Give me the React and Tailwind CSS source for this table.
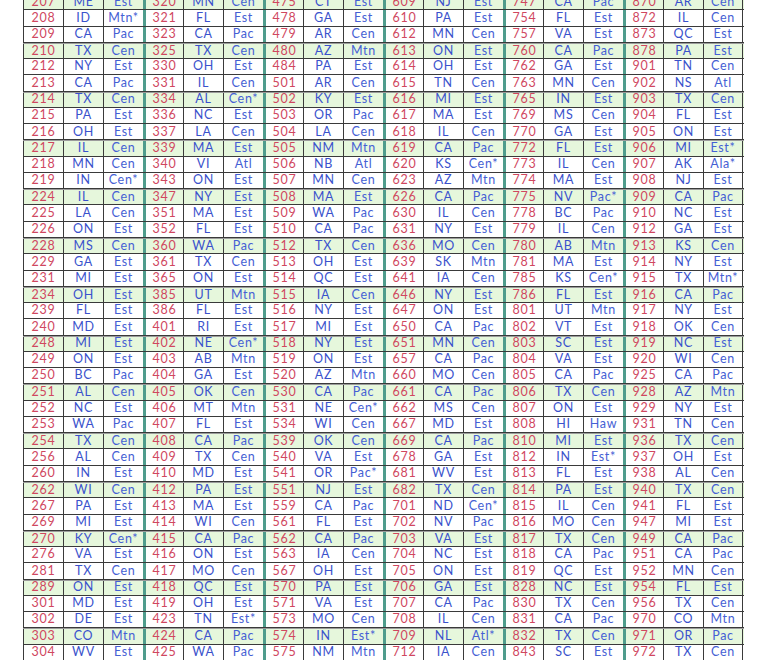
// --- AREA CODE TABLE ---
const GROUPS = [
  "207 ME Est|208 ID Mtn*|209 CA Pac|210 TX Cen|212 NY Est|213 CA Pac|214 TX Cen|215 PA Est|216 OH Est|217 IL Cen|218 MN Cen|219 IN Cen*|224 IL Cen|225 LA Cen|226 ON Est|228 MS Cen|229 GA Est|231 MI Est|234 OH Est|239 FL Est|240 MD Est|248 MI Est|249 ON Est|250 BC Pac|251 AL Cen|252 NC Est|253 WA Pac|254 TX Cen|256 AL Cen|260 IN Est|262 WI Cen|267 PA Est|269 MI Est|270 KY Cen*|276 VA Est|281 TX Cen|289 ON Est|301 MD Est|302 DE Est|303 CO Mtn|304 WV Est",
  "320 MN Cen|321 FL Est|323 CA Pac|325 TX Cen|330 OH Est|331 IL Cen|334 AL Cen*|336 NC Est|337 LA Cen|339 MA Est|340 VI Atl|343 ON Est|347 NY Est|351 MA Est|352 FL Est|360 WA Pac|361 TX Cen|365 ON Est|385 UT Mtn|386 FL Est|401 RI Est|402 NE Cen*|403 AB Mtn|404 GA Est|405 OK Cen|406 MT Mtn|407 FL Est|408 CA Pac|409 TX Cen|410 MD Est|412 PA Est|413 MA Est|414 WI Cen|415 CA Pac|416 ON Est|417 MO Cen|418 QC Est|419 OH Est|423 TN Est*|424 CA Pac|425 WA Pac",
  "475 CT Est|478 GA Est|479 AR Cen|480 AZ Mtn|484 PA Est|501 AR Cen|502 KY Est|503 OR Pac|504 LA Cen|505 NM Mtn|506 NB Atl|507 MN Cen|508 MA Est|509 WA Pac|510 CA Pac|512 TX Cen|513 OH Est|514 QC Est|515 IA Cen|516 NY Est|517 MI Est|518 NY Est|519 ON Est|520 AZ Mtn|530 CA Pac|531 NE Cen*|534 WI Cen|539 OK Cen|540 VA Est|541 OR Pac*|551 NJ Est|559 CA Pac|561 FL Est|562 CA Pac|563 IA Cen|567 OH Est|570 PA Est|571 VA Est|573 MO Cen|574 IN Est*|575 NM Mtn",
  "609 NJ Est|610 PA Est|612 MN Cen|613 ON Est|614 OH Est|615 TN Cen|616 MI Est|617 MA Est|618 IL Cen|619 CA Pac|620 KS Cen*|623 AZ Mtn|626 CA Pac|630 IL Cen|631 NY Est|636 MO Cen|639 SK Mtn|641 IA Cen|646 NY Est|647 ON Est|650 CA Pac|651 MN Cen|657 CA Pac|660 MO Cen|661 CA Pac|662 MS Cen|667 MD Est|669 CA Pac|678 GA Est|681 WV Est|682 TX Cen|701 ND Cen*|702 NV Pac|703 VA Est|704 NC Est|705 ON Est|706 GA Est|707 CA Pac|708 IL Cen|709 NL Atl*|712 IA Cen",
  "747 CA Pac|754 FL Est|757 VA Est|760 CA Pac|762 GA Est|763 MN Cen|765 IN Est|769 MS Cen|770 GA Est|772 FL Est|773 IL Cen|774 MA Est|775 NV Pac*|778 BC Pac|779 IL Cen|780 AB Mtn|781 MA Est|785 KS Cen*|786 FL Est|801 UT Mtn|802 VT Est|803 SC Est|804 VA Est|805 CA Pac|806 TX Cen|807 ON Est|808 HI Haw|810 MI Est|812 IN Est*|813 FL Est|814 PA Est|815 IL Cen|816 MO Cen|817 TX Cen|818 CA Pac|819 QC Est|828 NC Est|830 TX Cen|831 CA Pac|832 TX Cen|843 SC Est",
  "870 AR Cen|872 IL Cen|873 QC Est|878 PA Est|901 TN Cen|902 NS Atl|903 TX Cen|904 FL Est|905 ON Est|906 MI Est*|907 AK Ala*|908 NJ Est|909 CA Pac|910 NC Est|912 GA Est|913 KS Cen|914 NY Est|915 TX Mtn*|916 CA Pac|917 NY Est|918 OK Cen|919 NC Est|920 WI Cen|925 CA Pac|928 AZ Mtn|929 NY Est|931 TN Cen|936 TX Cen|937 OH Est|938 AL Cen|940 TX Cen|941 FL Est|947 MI Est|949 CA Pac|951 CA Pac|952 MN Cen|954 FL Est|956 TX Cen|970 CO Mtn|971 OR Pac|972 TX Cen",
].map((g) => g.split("|").map((r) => r.split(" ")));

const ROWS = GROUPS[0].map((_, i) => GROUPS.map((g) => g[i]));

function Row({ cells, index }) {
  const green = index % 3 === 0;
  return (
    <div
      className={`flex h-[16.28px] box-border border-b border-[#3a3a3a] ${
        green ? "bg-[#e6f7dc] border-t border-t-[#9c9c9c]" : "bg-white"
      }`}
    >
      {cells.map(([code, st, tz], g) => (
        <div key={code} className="flex">
          <div
            className={`w-[40px] flex items-center justify-center text-[#d0475f] ${
              g === 0 ? "border-l border-[#3a3a3a]" : "border-l-[3px] border-[#4f9c8c]"
            }`}
          >
            {code}
          </div>
          <div className="w-[40px] flex items-center justify-center border-l border-[#3a3a3a] text-[#3a52cc]">
            {st}
          </div>
          <div
            className={`w-[40px] flex items-center justify-center border-l border-[#3a3a3a] text-[#4560d4] ${
              g === 5 ? "border-r" : ""
            }`}
          >
            {tz}
          </div>
        </div>
      ))}
    </div>
  );
}

export default function App() {
  return (
    <div className="w-[770px] h-[660px] overflow-hidden bg-white">
      <div
        className="ml-[23px] -mt-[6px] w-[721px] text-[12.5px] leading-none tracking-[0.7px]"
        style={{ fontFamily: "Lato, 'Open Sans', sans-serif" }}
      >
        {ROWS.map((cells, i) => (
          <Row key={i} cells={cells} index={i} />
        ))}
      </div>
    </div>
  );
}
